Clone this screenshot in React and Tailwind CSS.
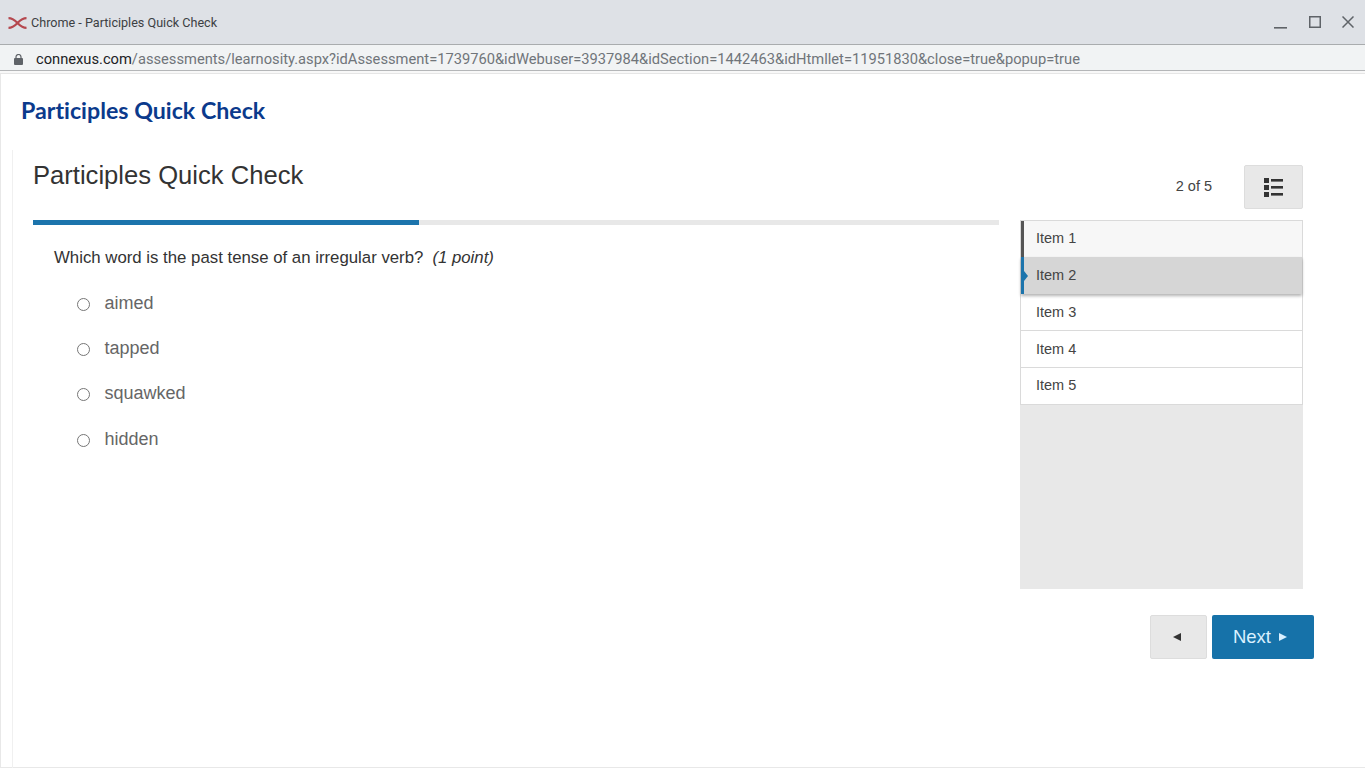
import React from "react";

const choices = ["aimed", "tapped", "squawked", "hidden"];
const items = ["Item 1", "Item 2", "Item 3", "Item 4", "Item 5"];

const App = () => {
  return (
    <div className="flex h-[768px] w-[1365px] flex-col overflow-hidden bg-white font-['Liberation_Sans',sans-serif] text-[#333333]">
      {/* Window title bar */}
      <div className="flex h-[45px] shrink-0 items-center border-b border-[#a9acae] bg-[#dee1e6] pl-[8px] pr-[11px] font-['Roboto',sans-serif]">
        <svg className="mt-[1px]" width="19" height="12" viewBox="0 0 19 12" fill="none" stroke="#b5484f" strokeWidth="2.2">
          <path d="M0.5 1.2 C5 1.2 7 3.5 9.5 6 C12 8.5 14 10.8 18.5 10.8" />
          <path d="M0.5 10.8 C5 10.8 7 8.5 9.5 6 C12 3.5 14 1.2 18.5 1.2" />
        </svg>
        <span className="ml-[4px] translate-y-px text-[12.6px] text-[#3c4043]">Chrome - Participles Quick Check</span>
        <div className="ml-auto flex items-center text-[#5f6368]">
          <svg className="mt-[12px]" width="13" height="2" viewBox="0 0 13 2" fill="currentColor"><rect width="13" height="1.6" /></svg>
          <svg className="ml-[22px]" width="12" height="12" viewBox="0 0 12 12" fill="none" stroke="currentColor" strokeWidth="1.5"><rect x="0.75" y="0.75" width="10.5" height="10.5" /></svg>
          <svg className="ml-[21px]" width="12" height="12" viewBox="0 0 12 12" fill="none" stroke="currentColor" strokeWidth="1.5"><path d="M0.5 0.5 L11.5 11.5 M11.5 0.5 L0.5 11.5" /></svg>
        </div>
      </div>

      {/* URL bar */}
      <div className="flex h-[26px] shrink-0 items-center border-b border-[#b4b6b8] bg-[#f1f3f4] pl-[14px] pt-[3px] font-['Roboto',sans-serif] text-[14.7px]">
        <svg width="9" height="11" viewBox="0 0 9 11" fill="#5f6368">
          <rect x="0" y="4" width="9" height="7" rx="1" />
          <path d="M2 4.5 V3 a2.5 2.5 0 0 1 5 0 V4.5" fill="none" stroke="#5f6368" strokeWidth="1.2" />
        </svg>
        <span className="ml-[13px] text-[#202124]">connexus.com</span>
        <span className="text-[#70757a]">/assessments/learnosity.aspx?idAssessment=1739760&amp;idWebuser=3937984&amp;idSection=1442463&amp;idHtmllet=11951830&amp;close=true&amp;popup=true</span>
      </div>
      <div className="h-[3px] shrink-0 border-b border-[#e6e6e6] bg-[#f8f8f8]" />

      {/* Page below the browser chrome */}
      <div className="min-h-0 flex-1 border-b border-l border-[#e8e8e8]">
        <h1 className="pl-[20px] pt-[21px] font-['Lato',sans-serif] text-[23.2px] font-bold leading-[30px] text-[#0b3a8c] [font-variant-ligatures:none]">
          Participles Quick Check
        </h1>

        {/* Assessment frame */}
        <div className="ml-[11px] mt-[25px] h-[618px] border-l border-[#f0f0f0] pl-[20px]">
          <div className="flex w-[1270px]">
            <div className="w-[966px]">
              <h2 className="pt-[9px] text-[25.6px] font-normal leading-[32px] text-[#333333]">Participles Quick Check</h2>
              <div className="mt-[29px] h-[5px] w-full bg-[#e8e8e8]">
                <div className="h-full w-[40%] bg-[#1c74ac]" />
              </div>
              <p className="pl-[21px] pt-[23px] text-[16.8px] leading-[20px] text-[#333333]">
                Which word is the past tense of an irregular verb?
                <em className="ml-[9px]">(1 point)</em>
              </p>
              <div className="pl-[44px] pt-[14px]">
                {choices.map((c) => (
                  <label key={c} className="flex h-[45.2px] items-center text-[18px] text-[#666666]">
                    <span className="h-[13px] w-[13px] rounded-full border border-[#767676] bg-white" />
                    <span className="ml-[14.5px] -translate-y-px">{c}</span>
                  </label>
                ))}
              </div>
            </div>

            <div className="ml-[21px] w-[283px]">
              <div className="flex h-[70px] items-start justify-end">
                <span className="mr-[32px] mt-[27px] text-[14.5px] leading-[18px] text-[#444444]">2 of 5</span>
                <button className="mt-[15px] flex h-[44px] w-[59px] items-center justify-center rounded-[2px] border border-[#dddddd] bg-[#e8e8e8]">
                  <svg width="19" height="19" viewBox="0 0 19 19" fill="#333333">
                    <rect x="0" y="0" width="5" height="5" />
                    <rect x="7" y="1" width="12" height="2.6" />
                    <rect x="0" y="7" width="5" height="5" />
                    <rect x="7" y="8" width="12" height="2.6" />
                    <rect x="0" y="14" width="5" height="5" />
                    <rect x="7" y="15" width="12" height="2.6" />
                  </svg>
                </button>
              </div>
              <div className="h-[369px] bg-[#e8e8e8]">
                <div className="border border-[#dadada] bg-white text-[14.5px] text-[#444444]">
                  {items.map((item, i) => {
                    if (i === 0) {
                      return (
                        <div key={item} className="flex h-[36px] items-center border-l-[3px] border-[#555555] bg-[#f7f7f7] pb-px pl-[12px]">
                          {item}
                        </div>
                      );
                    }
                    if (i === 1) {
                      return (
                        <div key={item} className="relative z-10 flex h-[37px] items-center border-l-[3px] border-[#1c74ac] bg-[#d6d6d6] pl-[12px] shadow-[0_2px_3px_rgba(0,0,0,0.3)]">
                          <span className="absolute left-0 top-[14px] h-0 w-0 border-y-[5px] border-l-[4px] border-y-transparent border-l-[#1c74ac]" />
                          {item}
                        </div>
                      );
                    }
                    if (i === 4) {
                      return (
                        <div key={item} className="flex h-[36px] items-center pb-px pl-[15px]">
                          {item}
                        </div>
                      );
                    }
                    return (
                      <div key={item} className="flex h-[37px] items-center border-b border-[#dadada] pl-[15px] pt-px">
                        {item}
                      </div>
                    );
                  })}
                </div>
              </div>
            </div>
          </div>

          {/* Prev / Next */}
          <div className="flex w-[1281px] justify-end gap-[5px] pt-[26px]">
            <button className="flex h-[44px] w-[57px] items-center justify-center rounded-[2px] border border-[#dddddd] bg-[#e8e8e8] pr-[3px] text-[#333333]">
              <svg width="8" height="8" viewBox="0 0 8 8" fill="#333333"><path d="M0 4 L8 0 V8 Z" /></svg>
            </button>
            <button className="flex h-[44px] w-[102px] items-center justify-center rounded-[2px] bg-[#1672a9] pr-[6px] text-[18.5px] text-[#d9f0ff]">
              Next
              <svg className="ml-[8px]" width="8" height="8" viewBox="0 0 8 8" fill="#d9f0ff"><path d="M8 4 L0 0 V8 Z" /></svg>
            </button>
          </div>
        </div>
      </div>
    </div>
  );
};

export default App;
